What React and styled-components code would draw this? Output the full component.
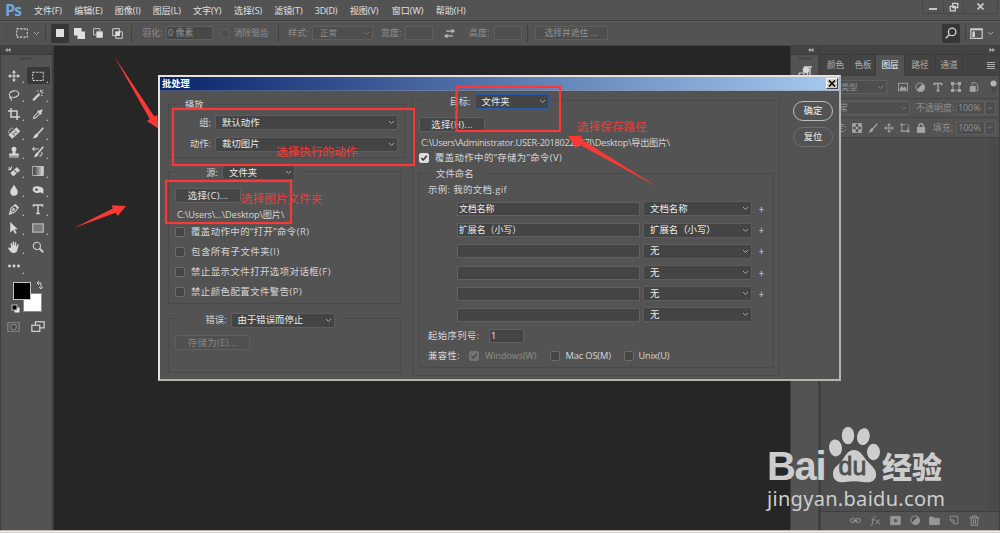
import React from 'react';
import styled, { createGlobalStyle, css } from 'styled-components';

const Global = createGlobalStyle`
  * { box-sizing: border-box; }
  html, body { margin: 0; padding: 0; background: #262626; overflow: hidden; }
  body { font-family: "Open Sans", "Noto Sans CJK SC", sans-serif; font-size: 9px; color: #d6d6d6; }
`;

const Window = styled.div`
  position: relative;
  width: 1000px;
  height: 533px;
  display: flex;
  flex-direction: column;
  background: #535353;
  overflow: hidden;
`;

const Text = styled.span`
  font-size: ${(p) => p.$size || 9}px;
  letter-spacing: ${(p) => p.$ls || 0}px;
  color: ${(p) => p.$color || 'inherit'};
  line-height: 12px;
  white-space: pre;
`;

/* ---------- menu ---------- */
const MenuBar = styled.header`
  height: 20px;
  display: flex;
  align-items: center;
  padding-left: 5px;
`;
const Logo = styled.div`
  width: 29px;
  font: 700 16px/18px "Open Sans", sans-serif;
  letter-spacing: -1px;
  color: #74a5d8;
`;
const MenuItem = styled.div`
  width: ${(p) => p.$w}px;
  font-size: 9px;
  line-height: 21px;
  white-space: nowrap;
  letter-spacing: ${(p) => p.$ls || 0}px;
  color: #e2e2e2;
`;
const WindowButtons = styled.div`
  margin-left: auto;
  height: 14px;
  align-self: flex-start;
  display: flex;
  border: 1px solid #474747;
  border-top: 0;
  margin-right: 2px;
`;
const WindowButton = styled.div`
  width: ${(p) => p.$w}px;
  display: flex;
  justify-content: center;
  align-items: center;
  & + & { border-left: 1px solid #494949; }
`;

/* ---------- options bar ---------- */
const OptionsBar = styled.div`
  height: 26px;
  display: flex;
  align-items: center;
  border-top: 1px solid #3f3f3f;
  border-bottom: 1px solid #434343;
  box-shadow: inset 0 1px #5b5b5b;
  padding-left: 4px;
`;
const Grip = styled.div`
  width: 3px;
  height: 15px;
  border-left: 1px dotted #484848;
  border-right: 1px dotted #484848;
`;
const Divider = styled.div`
  width: 1px;
  height: 17px;
  background: #404040;
  margin: 0 ${(p) => p.$r || 0}px 0 ${(p) => p.$l || 0}px;
`;
const ModeButton = styled.div`
  width: 18px;
  height: 19px;
  margin-right: 1px;
  display: flex;
  align-items: center;
  justify-content: center;
  background: ${(p) => (p.$on ? '#363636' : 'transparent')};
  border-radius: 2px;
`;
const DimBox = styled.div`
  width: ${(p) => p.$w}px;
  height: ${(p) => p.$h || 14}px;
  border: 1px solid #5f5f5f;
  border-radius: 1px;
  background: ${(p) => p.$bg || '#4e4e4e'};
  display: flex;
  align-items: center;
  justify-content: ${(p) => p.$justify || 'space-between'};
  padding: 0 ${(p) => p.$pr || 2}px 0 ${(p) => p.$pl || 1}px;
  margin-left: ${(p) => p.$ml || 0}px;
  color: #939393;
`;
const Slot = styled.div`
  width: ${(p) => p.$w}px;
  padding-left: ${(p) => p.$pl || 0}px;
  display: flex;
  align-items: center;
  color: #8d8d8d;
`;

/* ---------- workspace ---------- */
const Workspace = styled.main`
  height: 484px;
  display: flex;
`;
const ToolDock = styled.aside`
  width: 54px;
  border-left: 1px solid #404040;
  border-right: 2px solid #3d3d3d;
  display: flex;
  flex-direction: column;
`;
const DockHeader = styled.div`
  height: 9px;
  flex: none;
  background: #434343;
  border-bottom: 1px solid #3a3a3a;
  display: flex;
  align-items: center;
  justify-content: ${(p) => (p.$end ? 'flex-end' : 'flex-start')};
  padding: 0 4px;
`;
const GripRow = styled.div`
  width: 14px;
  height: 3px;
  margin: 2px 0 0 ${(p) => p.$ml}px;
  background: repeating-linear-gradient(90deg, #424242 0 1px, #505050 1px 2px);
`;
const ToolGrid = styled.div`
  margin-top: 6px;
  display: grid;
  grid-template-columns: 24.5px 24px;
  grid-auto-rows: 19.05px;
`;
const Tool = styled.div`
  display: flex;
  align-items: center;
  justify-content: center;
  margin: 1px 0 1px 1px;
  width: 23px;
  border-radius: 2px;
  background: ${(p) => (p.$on ? '#383838' : 'transparent')};
  position: relative;
`;
const Corner = styled.i`
  position: absolute;
  right: 1.5px;
  bottom: 1px;
  border-left: 2.5px solid transparent;
  border-bottom: 2.5px solid #b0b0b0;
`;
const Swatches = styled.div`
  height: 42px;
  padding: 4px 0 0 9px;
`;
const ScreenModes = styled.div`
  display: flex;
  align-items: center;
  gap: 11px;
  height: 12px;
  margin-top: 3px;
  padding-left: 6px;
`;
const Canvas = styled.section`
  flex: 1;
  background: #262626;
`;
const IconDock = styled.aside`
  width: 31px;
  border-left: 1px solid #3d3d3d;
  border-right: 3px solid #414141;
`;
const ParagraphTile = styled.div`
  display: flex;
  padding: 6px 0 0 7px;
`;
const Panels = styled.aside`
  width: 179px;
  border-right: 1px solid #404040;
  display: flex;
  flex-direction: column;
`;
const TabRow = styled.div`
  height: 21px;
  display: flex;
  background: #434343;
  border-bottom: 1px solid #3e3e3e;
`;
const Tab = styled.div`
  width: ${(p) => p.$w}px;
  height: 21px;
  text-align: center;
  font-size: 8.6px;
  line-height: 20px;
  color: ${(p) => (p.$on ? '#f0f0f0' : '#b0b0b0')};
  background: ${(p) => (p.$on ? '#535353' : 'transparent')};
  border-right: 1px solid #3c3c3c;
`;
const TabMenu = styled.div`
  margin-left: auto;
  display: flex;
  align-items: flex-start;
  padding: 7px 4px 0 0;
`;
const PanelRow = styled.div`
  height: ${(p) => p.$h}px;
  display: flex;
  align-items: center;
  padding-left: 5px;
  border-bottom: 1px solid #454545;
  color: #a3a3a3;
`;
const IconStrip = styled.div`
  display: flex;
  align-items: center;
  gap: ${(p) => p.$gap}px;
  margin-left: ${(p) => p.$ml || 0}px;
`;
const Layers = styled.div`
  flex: 1;
  background: #4d4d4d;
  border-right: 10px solid #4a4a4a;
`;
const PanelFooter = styled.div`
  height: 19px;
  display: flex;
  align-items: center;
  gap: 9.1px;
  padding: 0 0 2px 29px;
  border-top: 1px solid #3f3f3f;
`;
const TaskEdge = styled.footer`
  height: 3px;
  background: linear-gradient(#b8b4ac 0 1px, #f3f1ea 1px 2px, #d4d0c8 2px);
`;

/* ---------- dialog ---------- */
const Dialog = styled.div`
  position: absolute;
  left: 158px;
  top: 75px;
  width: 683px;
  height: 306px;
  border: 2px solid #b5b3ae;
  border-top-color: #e6e3dc;
  border-left-color: #e6e3dc;
  background: #535353;
  display: flex;
  flex-direction: column;
`;
const TitleBar = styled.div`
  height: 14px;
  flex: none;
  display: flex;
  align-items: center;
  justify-content: space-between;
  padding: 0 1px 0 2px;
  background: linear-gradient(90deg, #0a246a, #a6caf0);
  border-bottom: 1px solid #9b9b9b66;
  font-weight: 700;
  font-size: 9.3px;
  line-height: 13px;
  color: #fff;
`;
const CloseBox = styled.div`
  width: 12px;
  height: 11px;
  background: #d4d0c8;
  border: 1px solid;
  border-color: #fff #404040 #404040 #fff;
  display: flex;
  align-items: center;
  justify-content: center;
`;
const DialogBody = styled.div`
  flex: 1;
  display: flex;
`;
const LeftColumn = styled.div`
  width: 252px;
  padding: 13px 0 0 8px;
`;
const MiddleColumn = styled.div`
  width: 368px;
  padding-top: 9px;
`;
const RightColumn = styled.div`
  padding: 10px 0 0 13px;
  display: flex;
  flex-direction: column;
  gap: 6px;
`;
const Group = styled.section`
  width: ${(p) => p.$w}px;
  height: ${(p) => p.$h}px;
  margin-bottom: ${(p) => p.$mb || 0}px;
  margin-left: ${(p) => p.$ml || 0}px;
  border: 1px solid #494949;
`;
const Legend = styled.div`
  height: ${(p) => p.$h}px;
  width: ${(p) => p.$w}px;
  margin: ${(p) => -p.$h / 2 + (p.$dy ?? 0.5)}px 0 0 ${(p) => p.$ml}px;
  padding-left: ${(p) => p.$pl || 0}px;
  background: #535353;
  display: flex;
  align-items: center;
`;
const Row = styled.div`
  height: ${(p) => p.$h}px;
  display: flex;
  align-items: center;
  padding-left: ${(p) => p.$pl || 0}px;
  padding-top: ${(p) => p.$pt || 0}px;
`;
const FieldLabel = styled.div`
  width: ${(p) => p.$w}px;
  flex: none;
  text-align: ${(p) => p.$align || 'right'};
  padding-right: ${(p) => p.$pr ?? 4}px;
  font-size: 9.3px;
  line-height: 12px;
  letter-spacing: ${(p) => p.$ls || 0}px;
  white-space: nowrap;
`;
const SelectBox = styled.div`
  width: ${(p) => p.$w}px;
  height: 15px;
  flex: none;
  display: flex;
  align-items: center;
  justify-content: space-between;
  padding: 0 2px 0 6px;
  background: #444;
  border: 1px solid ${(p) => (p.$focus ? '#265ea6' : '#5d5d5d')};
  border-radius: 2px;
  font-size: 9.4px;
  line-height: 12px;
  color: #ececec;
`;
const InputBox = styled.div`
  width: ${(p) => p.$w}px;
  height: 14px;
  flex: none;
  padding-left: 1px;
  background: #444;
  border: 1px solid #606060;
  font-size: ${(p) => p.$size || 8.9}px;
  line-height: 12px;
  color: #ececec;
`;
const Button = styled.div`
  width: ${(p) => p.$w}px;
  height: 15px;
  border: 1px solid #606060;
  border-radius: 2px;
  background: ${(p) => (p.$off ? '#505050' : '#464646')};
  color: ${(p) => (p.$off ? '#858585' : '#e2e2e2')};
  font-size: 9.5px;
  line-height: 13px;
  letter-spacing: .3px;
  text-align: center;
`;
const PillButton = styled.div`
  width: 40px;
  height: 20px;
  border: ${(p) => (p.$primary ? '1.5px solid #bdbdbd' : '1px solid #6e6e6e')};
  border-radius: 10px;
  text-align: center;
  font-size: 9.3px;
  line-height: 18px;
  color: #efefef;
`;
const Box = styled.span`
  width: 10px;
  height: 10px;
  flex: none;
  margin-right: ${(p) => p.$gap || 6}px;
  border-radius: 2px;
  display: flex;
  align-items: center;
  justify-content: center;
  border: 1px solid #6c6c6c;
  background: #454545;
  ${(p) => p.$checked && css`
    background: ${p.$off ? '#737373' : '#dcdcdc'};
    border-color: ${p.$off ? '#737373' : '#dcdcdc'};
  `}
`;
const PlusSign = styled.span`
  margin-left: 6.5px;
  font-size: 10px;
  line-height: 14px;
  color: #d5d5d5;
`;

/* ---------- overlays ---------- */
const Marks = styled.svg`
  position: absolute;
  left: 0;
  top: 0;
`;
const Note = styled.div`
  position: absolute;
  left: ${(p) => p.$x}px;
  top: ${(p) => p.$y}px;
  font-size: 11.65px;
  line-height: 16px;
  font-family: "Noto Sans CJK SC", sans-serif;
  color: #f23b38;
  white-space: nowrap;
`;
const Watermark = styled.div`
  position: absolute;
  left: 767px;
  top: 422px;
  width: 190px;
  color: #cdcdcd;
`;
const BrandRow = styled.div`
  height: 62px;
  display: flex;
  align-items: flex-end;
`;
const BrandLatin = styled.div`
  width: 64px;
  font: 700 40px/36px "Liberation Sans", sans-serif;
  letter-spacing: -1.3px;
`;
const Paw = styled.div`
  position: relative;
  width: 50px;
  height: 60px;
`;
const PawArt = styled.svg`
  display: block;
  overflow: visible;
`;
const PawText = styled.div`
  position: absolute;
  left: 7.5px;
  top: 27.5px;
  font: 400 25px/28px "Liberation Sans", sans-serif;
  -webkit-text-stroke: .8px #505050;
  color: #505050;
`;
const BrandCjk = styled.div`
  font: 900 30px/32px "Noto Sans CJK SC", sans-serif;
  margin: 0 0 3px 1px;
`;
const BrandUrl = styled.div`
  margin-top: 3.5px;
  font: 400 20px/22px "Noto Sans", sans-serif;
  letter-spacing: .3px;
`;

const Svg = ({ w = 14, h = w, vb = 16, children, ...rest }) => (
  <svg width={w} height={h} viewBox={`0 0 ${vb} ${vb}`} fill="none" stroke="#d2d2d2" strokeWidth="1.4" {...rest}>
    {children}
  </svg>
);
const Chevron = ({ color = '#a8a8a8', w = 7 }) => (
  <svg width={w} height="5" viewBox="0 0 7 5" fill="none" stroke={color}><path d="M1 1l2.5 2.5L6 1" /></svg>
);
const Arrows = ({ flip }) => (
  <svg width="6" height="4" viewBox="0 0 7 5" fill="#c4c4c4" transform={flip ? 'scale(-1 1)' : undefined}>
    <path d="M3 0v5L0 2.5zM6.5 0v5L3.5 2.5z" />
  </svg>
);
const F = '#d8d8d8';

const tools = [
  ['move', <><path d="M8 2v12M2 8h12" /><path fill={F} stroke="none" d="M8 0l2.6 3.500H5.400zM8 16l2.600-3.500H5.400zM0 8l3.500-2.600v5.200zM16 8l-3.500-2.600v5.200z" /></>],
  ['marquee', <rect x="1" y="3" width="14" height="11" strokeDasharray="3 1.5" />],
  ['lasso', <path d="M4 11C0 8 2 3 8 2.5s8 4 5 6.500-7 2.500-9 1.500c-2-1-2 1.500-.5 2s2 1 .5 3" />],
  ['wand', <><path d="M1.500 15L10 6.500" strokeWidth="3" /><path d="M11.500 1v3M15 5h-3M7 2l1.500 1.500M14.500 1.500l-1.500 1.500M14 9l-1.500-1" /></>],
  ['crop', <path d="M4 0v12h12M0 4h12v12" strokeWidth="2" />],
  ['dropper', <><path d="M2 14l1-3 6-6 2 2-6 6z" /><path d="M8 3.500L12.500 8M10 6l3.500-3.500" strokeWidth="2.800" /></>],
  ['heal', <><path d="M3 13L14 3" strokeWidth="7.500" /><path d="M4.500 7.500l4.500 4.500M8.500 4l4.500 4.500" stroke="#555" strokeWidth="1" /><path d="M8 8h.1M9.500 7h.1M8 9.500h.1" stroke="#555" strokeLinecap="round" /><path d="M1 8a6 6 0 015.500-6.500" strokeDasharray="1.500 1" /></>],
  ['brush', <><path d="M15 1L7 10" strokeWidth="2.200" /><path fill={F} stroke="none" d="M6 8.500l2.500 2.300C7.500 14 4 15.500 1 15c2-1.500 2-5.500 5-6.500z" /></>],
  ['stamp', <path fill={F} stroke="none" d="M8 1a3.300 3.300 0 012 6v3h4.500v3h-13v-3H6V7a3.300 3.300 0 012-6zM1.500 14h13v1.300h-13z" />],
  ['history', <><path d="M15 1L7.500 10" strokeWidth="2.200" /><path fill={F} stroke="none" d="M6.500 8.500L9 10.800C8 14 5 15 2 15c2-1.500 2-5.500 4.500-6.500z" /><path d="M1 4h8M3 1.500L1 4l2 2.500M13 8c1 3-1 5-3 6" /></>],
  ['eraser', <><path d="M5 13l9-8" strokeWidth="6" /><path d="M8 6.500l4 4.500" stroke="#555" /><path d="M1 3l3 3M5 2L3 7M0 6h4" /></>],
  ['gradient', <><defs><linearGradient id="gr"><stop stopColor="#333" /><stop offset="1" stopColor="#ddd" /></linearGradient></defs><rect x="1" y="2" width="14" height="12" fill="url(#gr)" strokeWidth="1" /></>],
  ['blur', <path fill={F} stroke="none" d="M8 1c2 4 5 6 5 9.500a5 5 0 01-10 0C3 7 6 5 8 1z" />],
  ['dodge', <path fill={F} stroke="none" fillRule="evenodd" d="M1 6c1-4 8-4 13-1 2 2 1 5 1 8l-4-2c-3 2-11 1-10-5zm3 1.500c0 2 4 2 4 .2S4 5.500 4 7.500z" />],
  ['pen', <><path d="M2 15l2-8 5-4 4 4-4 5zM2 15l5-6" /><path d="M9 2l5 5" strokeWidth="2.400" /><circle cx="7.500" cy="8.500" r="1" fill={F} /></>],
  ['type', <path d="M2 5V2.500h12V5M8 2.500v12M5.500 14h5" strokeWidth="2" />],
  ['select', <path fill={F} stroke="none" d="M3 0l10 9.500H9l2.500 5-2.300 1.200L7 10.500l-4 3.500z" />],
  ['shape', <rect x="1" y="2.500" width="14" height="11" fill="#7a7a7a" strokeWidth="1.200" />],
  ['hand', <path fill={F} stroke="none" d="M4 9L3.500 3.500C3.500 2 5 2 5.300 3.500L6 7l.3-5.500c0-1.500 1.700-1.500 1.800 0L8.500 7l1-5c.3-1.300 1.800-1 1.600.3L10.800 8l1.800-3.500c.6-1 2-.5 1.600.8L12.500 12c-.7 3-2 4-5 4-3.500 0-4-2-7.200-6-.8-1.200.6-2 1.700-1z" />],
  ['zoom', <><circle cx="6.500" cy="6.500" r="4.800" /><path d="M10 10l5 5" strokeWidth="2.400" /></>],
  ['more', <g fill={F} stroke="none"><circle cx="2" cy="8" r="1.900" /><circle cx="8" cy="8" r="1.900" /><circle cx="14" cy="8" r="1.900" /></g>],
];

const menus = [['文件(F)', 40.3], ['编辑(E)', 40.5], ['图像(I)', 38], ['图层(L)', 40.2], ['文字(Y)', 41], ['选择(S)', 40.3], ['滤镜(T)', 40.5], ['3D(D)', 35, -0.2], ['视图(V)', 42], ['窗口(W)', 44], ['帮助(H)', 40]];

const Select = ({ w, children, focus }) => (
  <SelectBox $w={w} $focus={focus}><span>{children}</span><Chevron /></SelectBox>
);
const Check = ({ checked, off, gap }) => (
  <Box $checked={checked} $off={off} $gap={gap}>
    {checked && <svg width="8" height="8" viewBox="0 0 8 8" fill="none" stroke={off ? '#4b4b4b' : '#333'} strokeWidth="1.500"><path d="M1.300 4l2 2L6.800 1.800" /></svg>}
  </Box>
);

const I = '#a6a6a6';
const D = '#969696';
const PanelIcon = ({ children, w = 10 }) => <Svg w={w} stroke={I}>{children}</Svg>;

const nameRows = [['文档名称', '文档名称'], ['扩展名（小写）', '扩展名（小写）'], ['', '无'], ['', '无'], ['', '无'], ['', '无']];

function BatchDialog() {
  return (
    <Dialog>
      <TitleBar>
        批处理
        <CloseBox><svg width="8" height="7" viewBox="0 0 8 7" stroke="#000" strokeWidth="1.600"><path d="M1 .5l6 6M7 .5l-6 6" /></svg></CloseBox>
      </TitleBar>
      <DialogBody>
        <LeftColumn>
          <Group $w={237} $h={54} $mb={13}>
            <Legend $h={11} $w={31} $ml={10} $pl={6} $dy={-0.5}><Text $size={9.2}>播放</Text></Legend>
            <Row $h={25}><FieldLabel $w={46}>组:</FieldLabel><Select w={183}>默认动作</Select></Row>
            <Row $h={18.5}><FieldLabel $w={46}>动作:</FieldLabel><Select w={183}>裁切图片</Select></Row>
          </Group>
          <Group $w={233} $h={133} $mb={14}>
            <Legend $h={15} $w={121} $ml={10}><FieldLabel $w={43}>源:</FieldLabel><Select w={73}>文件夹</Select></Legend>
            <Row $h={31} $pl={6}><Button $w={66}>选择(C)...</Button></Row>
            <Row $h={7} $pl={8}><Text $ls={-0.14} $size={9.2}>C:\Users\...\Desktop\图片\</Text></Row>
            <Row $h={28.5} $pl={6}><Check /><Text $size={9.4} $ls={0.45}>覆盖动作中的“打开”命令(R)</Text></Row>
            <Row $h={11} $pl={6}><Check /><Text $size={9.4} $ls={0.5}>包含所有子文件夹(I)</Text></Row>
            <Row $h={28.5} $pl={6}><Check /><Text $size={9.4} $ls={0.48}>禁止显示文件打开选项对话框(F)</Text></Row>
            <Row $h={11} $pl={6}><Check /><Text $size={9.4} $ls={0.48}>禁止颜色配置文件警告(P)</Text></Row>
          </Group>
          <Group $w={233} $h={55}>
            <Legend $h={15} $w={161} $ml={10} $dy={1}><FieldLabel $w={51.5}>错误:</FieldLabel><Select w={104}>由于错误而停止</Select></Legend>
            <Row $h={29} $pl={6}><Button $w={75} $off>存储为(E)...</Button></Row>
          </Group>
        </LeftColumn>
        <MiddleColumn>
          <Group $w={368} $h={276}>
            <Legend $h={15} $w={131} $ml={10}><FieldLabel $w={51.5}>目标:</FieldLabel><Select w={74} focus>文件夹</Select></Legend>
            <Row $h={30} $pl={6}><Button $w={66}>选择(H)...</Button></Row>
            <Row $h={7} $pl={8}><Text $size={9.2} $ls={-0.28}>C:\Users\Administrator.USER-2018022217J\Desktop\导出图片\</Text></Row>
            <Row $h={23} $pl={6}><Check checked /><Text $size={9.4} $ls={0.4}>覆盖动作中的“存储为”命令(V)</Text></Row>
            <Row $h={4} />
            <Group $w={355} $h={195} $ml={6}>
              <Legend $h={11} $w={57} $ml={10} $pl={6} $dy={-0.5}><Text $size={9.4}>文件命名</Text></Legend>
              <Row $h={19.4} $pl={8} $pt={2.1}><Text $size={9.4} $ls={0.4}>示例: 我的文档.gif</Text></Row>
              {nameRows.map(([value, choice], i) => (
                <Row key={i} $h={21.2} $pl={37}>
                  <InputBox $w={183}>{value}</InputBox>
                  <Row $h={15} $pl={3}><Select w={109}>{choice}</Select></Row>
                  {i < 5 && <PlusSign>+</PlusSign>}
                </Row>
              ))}
              <Row $h={20.5} $pl={8}>
                <FieldLabel $w={61} $align="left" $ls={0.450}>起始序列号:</FieldLabel>
                <InputBox $w={35} $size={9}>1</InputBox>
              </Row>
              <Row $h={20} $pl={8}>
                <FieldLabel $w={41} $align="left" $ls={0.450}>兼容性:</FieldLabel>
                <Check checked off />
                <Slot $w={64.500}><Text $ls={-0.050}>Windows(W)</Text></Slot>
                <Check />
                <Row $h={12}><FieldLabel $w={58} $align="left" $ls={-0.15}>Mac OS(M)</FieldLabel></Row>
                <Check gap={5} />
                <Text $size={9.200} $ls={-0.1}>Unix(U)</Text>
              </Row>
            </Group>
          </Group>
        </MiddleColumn>
        <RightColumn>
          <PillButton $primary>确定</PillButton>
          <PillButton>复位</PillButton>
        </RightColumn>
      </DialogBody>
    </Dialog>
  );
}

export default function App() {
  return (
    <Window>
      <Global />
      <MenuBar>
        <Logo>Ps</Logo>
        {menus.map(([m, w, ls]) => <MenuItem key={m} $w={w} $ls={ls}>{m}</MenuItem>)}
        <WindowButtons>
          <WindowButton $w={20}><svg width="8" height="8"><path d="M0 5h8v2H0z" fill="#c4c4c4" /></svg></WindowButton>
          <WindowButton $w={20}><Svg w={10} strokeWidth="2"><path d="M6 2h8v7H6zM2 7h8v7H2z" /></Svg></WindowButton>
          <WindowButton $w={34}><svg width="7" height="7" viewBox="0 0 7 7" stroke="#c8c8c8" strokeWidth="1.700"><path d="M.5.5l6 6M6.500.5l-6 6" /></svg></WindowButton>
        </WindowButtons>
      </MenuBar>
      <OptionsBar>
        <Grip />
        <IconStrip $ml={9} $gap={5}>
          <Svg w={12}><rect x="1" y="2.500" width="14" height="11" strokeDasharray="3 1.500" /></Svg>
          <Chevron />
        </IconStrip>
        <Divider $l={5} $r={5} />
        <ModeButton $on><svg width="8" height="8"><path d="M0 0h8v8H0z" fill="#e0e0e0" /></svg></ModeButton>
        <ModeButton><Svg w={11}><path fill="#e0e0e0" stroke="none" d="M0 0h11v5h5v11H5v-5H0z" /></Svg></ModeButton>
        <ModeButton><Svg w={10}><path d="M11 5V1H1v10h4" /><path fill="#e0e0e0" d="M6 6h9v9H6z" /></Svg></ModeButton>
        <ModeButton><Svg w={11}><path d="M1 1h10v10H1zM5.500 5.500H15V15H5.500z" /><path fill="#e0e0e0" stroke="none" d="M5.500 5.500H11V11H5.500z" /></Svg></ModeButton>
        <Divider $l={4} $r={10} />
        <Slot $w={24}><Text>羽化:</Text></Slot>
        <DimBox $w={47} $bg="#474747"><Text>0 像素</Text></DimBox>
        <DimBox $w={9} $h={9} $ml={7} />
        <Slot $w={48} $pl={5}><Text $size={8.600}>消除锯齿</Text></Slot>
        <Divider $l={1} $r={9} />
        <Slot $w={24}><Text>样式:</Text></Slot>
        <DimBox $w={61} $pl={7}><Text $size={8.500}>正常</Text><Chevron color="#747474" /></DimBox>
        <Slot $w={32} $pl={8}><Text>宽度:</Text></Slot>
        <DimBox $w={28} />
        <IconStrip $ml={11} $gap={0}>
          <Svg w={11} stroke="#bbb"><path d="M3 4.500h11M2 11.500h11" strokeWidth="1.800" /><path fill="#bbb" stroke="none" d="M11 1l5 3.500L11 8zM5 8l-5 3.500L5 15z" /></Svg>
        </IconStrip>
        <Slot $w={38.5} $pl={14}><Text>高度:</Text></Slot>
        <DimBox $w={28} />
        <Divider $l={5.5} $r={7} />
        <DimBox $w={73} $justify="center"><Text $size={8.800}>选择并遮住 ...</Text></DimBox>
        <IconStrip $ml={334} $gap={4}>
          <ModeButton $on><Svg w={12} strokeWidth="1.800"><circle cx="9.500" cy="6.500" r="5" /><path d="M6 10l-5 5" /></Svg></ModeButton>
          <Divider />
          <Svg w={13}><rect x="1" y="2.500" width="14" height="11.500" /><path d="M1 3h14" strokeWidth="2" /><path fill={F} stroke="none" d="M3 5.500h3v7H3z" /></Svg>
          <Chevron />
        </IconStrip>
      </OptionsBar>
      <Workspace>
        <ToolDock>
          <DockHeader><Arrows /></DockHeader>
          <GripRow $ml={18} />
          <ToolGrid>
            {tools.map(([name, shape]) => (
              <Tool key={name} $on={name === 'marquee'}>
                <Svg w={12}>{shape}</Svg>
                {name !== 'zoom' && <Corner />}
              </Tool>
            ))}
          </ToolGrid>
          <Swatches>
            <svg width="36" height="38">
              <rect x="13.500" y="13.500" width="18" height="18" fill="#fff" stroke="#8b8b8b" />
              <rect x="3.500" y="2.500" width="17" height="17" fill="#000" stroke="#c3c3c3" />
              <path d="M27 3h4v5M27 3l2-2M27 3l2 2M31 9l-2-2M31 9l2-2" fill="none" stroke="#ccc" />
              <rect x="4.500" y="27.500" width="5" height="5" fill="#eee" />
              <rect x="2" y="25" width="5" height="5" fill="#000" stroke="#bbb" />
            </svg>
          </Swatches>
          <ScreenModes>
            <Svg w={13} h={10} stroke="#888" preserveAspectRatio="none"><rect x="1" y="1" width="14" height="14" /><ellipse cx="8" cy="8" rx="3.500" ry="4.500" fill="#484848" /></Svg>
            <Svg w={14}><rect x="5" y="2" width="10" height="7" /><rect x="1" y="6" width="9" height="7" fill="#535353" /></Svg>
          </ScreenModes>
        </ToolDock>
        <Canvas />
        <IconDock>
          <DockHeader $end><Arrows /></DockHeader>
          <GripRow $ml={7} />
          <ParagraphTile>
            <svg width="16" height="16" fill="none" stroke="#d0d0d0"><path d="M12 0v14M9.500 1v12M6 .8h8" strokeWidth="1.300" /><circle cx="8" cy="4" r="3" fill="#d8d8d8" /><path d="M1 7h5v6H1z" /></svg>
          </ParagraphTile>
        </IconDock>
        <Panels>
          <DockHeader $end><Arrows flip /></DockHeader>
          <TabRow>
            <Tab $w={30}>颜色</Tab><Tab $w={25}>色板</Tab><Tab $w={29} $on>图层</Tab><Tab $w={31}>路径</Tab><Tab $w={27}>通道</Tab>
            <TabMenu><svg width="8" height="7" stroke="#b0b0b0"><path d="M0 .5h8M0 2.500h8M0 4.500h8M0 6.500h8" /></svg></TabMenu>
          </TabRow>
          <PanelRow $h={23}>
            <DimBox $w={61} $pl={14}><Text $size={8.300}>类型</Text><Chevron color="#858585" /></DimBox>
            <IconStrip $ml={10.500} $gap={7.800}>
              <PanelIcon><rect x="1" y="2" width="14" height="12" /><path fill={I} d="M3 12l3-5 2.500 3L11 8l2 4z" /></PanelIcon>
              <PanelIcon><circle cx="8" cy="8" r="6.500" /><path fill={I} d="M12.500 3.500a6.500 6.500 0 11-9 9z" /></PanelIcon>
              <PanelIcon><path d="M2 5V2.500h12V5M8 2.500v12M5.500 14h5" strokeWidth="2.400" /></PanelIcon>
              <PanelIcon><path d="M3 3h10v10H3z" /><path fill={I} stroke="none" d="M0 0h5v5H0zM11 0h5v5h-5zM0 11h5v5H0zM11 11h5v5h-5z" /></PanelIcon>
              <PanelIcon><path d="M5 5V1h5l4 4v9h-3" /><path fill={I} d="M2 7h8v8H2z" /></PanelIcon>
            </IconStrip>
            <IconStrip $ml={11}><svg width="7" height="14"><rect x="1.500" y="1" width="4" height="12" rx="2" fill="#474747" /><circle cx="3.500" cy="3.500" r="3" fill="#b5b5b5" /></svg></IconStrip>
          </PanelRow>
          <PanelRow $h={19}>
            <DimBox $w={84} $pl={3}><Text>正常</Text><Chevron color="#777" /></DimBox>
            <Slot $w={46} $pl={6}><Text>不透明度:</Text></Slot>
            <DimBox $w={29}><Text $ls={-0.1}>100%</Text></DimBox>
            <DimBox $w={11}><Chevron color="#858585" /></DimBox>
          </PanelRow>
          <PanelRow $h={20}>
            <Text>锁定:</Text>
            <IconStrip $ml={5.5} $gap={6.100}>
              <PanelIcon><rect x="1" y="1" width="14" height="14" /><path fill={I} stroke="none" d="M1 1h5v5H1zM10 1h5v5h-5zM6 6h4v4H6zM1 10h5v5H1zM10 10h5v5h-5z" /></PanelIcon>
              <PanelIcon><path d="M15 1L7 10" strokeWidth="2.200" /><path fill={I} stroke="none" d="M6 8.500l2.500 2.300C7.500 14 4 15.500 1 15c2-1.500 2-5.500 5-6.500z" /></PanelIcon>
              <PanelIcon><path d="M8 2v12M2 8h12" /><path fill={I} stroke="none" d="M8 0l3 4H5zM8 16l3-4H5zM0 8l4-3v6zM16 8l-4-3v6z" /></PanelIcon>
              <PanelIcon><path d="M0 3h9M3 0v13h10V6M0 13h16M13 9v7M11 1l4 4" /></PanelIcon>
              <PanelIcon><rect x="2" y="7" width="12" height="8" fill={I} /><path d="M4.500 7V4.500a3.500 3.500 0 017 0V7" strokeWidth="2" /></PanelIcon>
            </IconStrip>
            <Slot $w={30} $pl={6.5}><Text>填充:</Text></Slot>
            <DimBox $w={29}><Text $ls={-0.1}>100%</Text></DimBox>
            <DimBox $w={11}><Chevron color="#858585" /></DimBox>
          </PanelRow>
          <Layers />
          <PanelFooter>
            <Svg w={11} stroke={D}><rect x="0.700" y="5" width="7" height="6" rx="3" /><rect x="8.300" y="5" width="7" height="6" rx="3" /><path d="M5 8h6" /></Svg>
            <Svg w={11} stroke={D}><path d="M8 3C6 1 5 3 4.500 6L3 14c-.5 1.500-1.500 1.500-2.500 1M2 7h5M8.500 7c2 0 3 6 6 6M14 7l-6.500 6" /></Svg>
            <Svg w={11} stroke={D}><path fill={D} fillRule="evenodd" d="M1 2h14v12H1zM8 5a3 3 0 100 6 3 3 0 000-6z" /></Svg>
            <Svg w={10} stroke={D}><circle cx="8" cy="8" r="6.500" /><path fill={D} d="M12.500 3.500a6.500 6.500 0 11-9 9z" /></Svg>
            <Svg w={11} stroke={D}><path fill={D} d="M1 3h5l2 2h7v9H1z" /></Svg>
            <Svg w={10} stroke={D}><path d="M2 2h12v12H8V8H2zM2 8l6 6" /></Svg>
            <Svg w={11} stroke={D}><path d="M1 4h14M5 4V1.500h6V4M3 4l.5 11h9L13 4M6.500 6v7M9.500 6v7" /></Svg>
          </PanelFooter>
        </Panels>
      </Workspace>
      <TaskEdge />

      <BatchDialog />

      <Watermark>
        <BrandRow>
          <BrandLatin>Bai</BrandLatin>
          <Paw>
            <PawArt width="52" height="60" viewBox="0 0 52 60" fill="#cdcdcd">
              <ellipse cx="4.500" cy="24" rx="6.500" ry="8.500" transform="rotate(-8 4 24)" />
              <ellipse cx="17" cy="11.500" rx="6.200" ry="8.700" />
              <ellipse cx="32.500" cy="12.500" rx="6.300" ry="8.500" transform="rotate(12 32 12)" />
              <ellipse cx="42.500" cy="28" rx="6.500" ry="8.300" />
              <path d="M23 26c7 0 9 7 14 12 4 4 9 8 8 14s-7 7-13 6-12-1-18 0-12-1-12-8c0-6 4-8 8-12 4-5 6-12 13-12z" />
            </PawArt>
            <PawText>du</PawText>
          </Paw>
          <BrandCjk>经验</BrandCjk>
        </BrandRow>
        <BrandUrl>jingyan.baidu.com</BrandUrl>
      </Watermark>

      <Marks width="1000" height="533" fill="none" stroke="#fa3937" strokeWidth="2.200">
        <rect x="173" y="109" width="241" height="56" />
        <rect x="166" y="181" width="125" height="42" />
        <rect x="456.500" y="87" width="103.500" height="44" />
        <g fill="#fa3937" stroke="none">
          <path d="M114 56l40.300 60.500 3-1.500.9 13.500L147 121l2.700-2z" />
          <path d="M74 228l38.700-19.500-.9-3.200L126 206l-8.300 10-2-3.300z" />
          <path d="M568.300 136l13.400-.2-.7 3.200 77.500 48.500-79.300-43-3.200 3.800z" />
        </g>
      </Marks>
      <Note $x={276} $y={142.500}>选择执行的动作</Note>
      <Note $x={241} $y={189.500}>选择图片文件夹</Note>
      <Note $x={577} $y={117.500}>选择保存路径</Note>
    </Window>
  );
}
